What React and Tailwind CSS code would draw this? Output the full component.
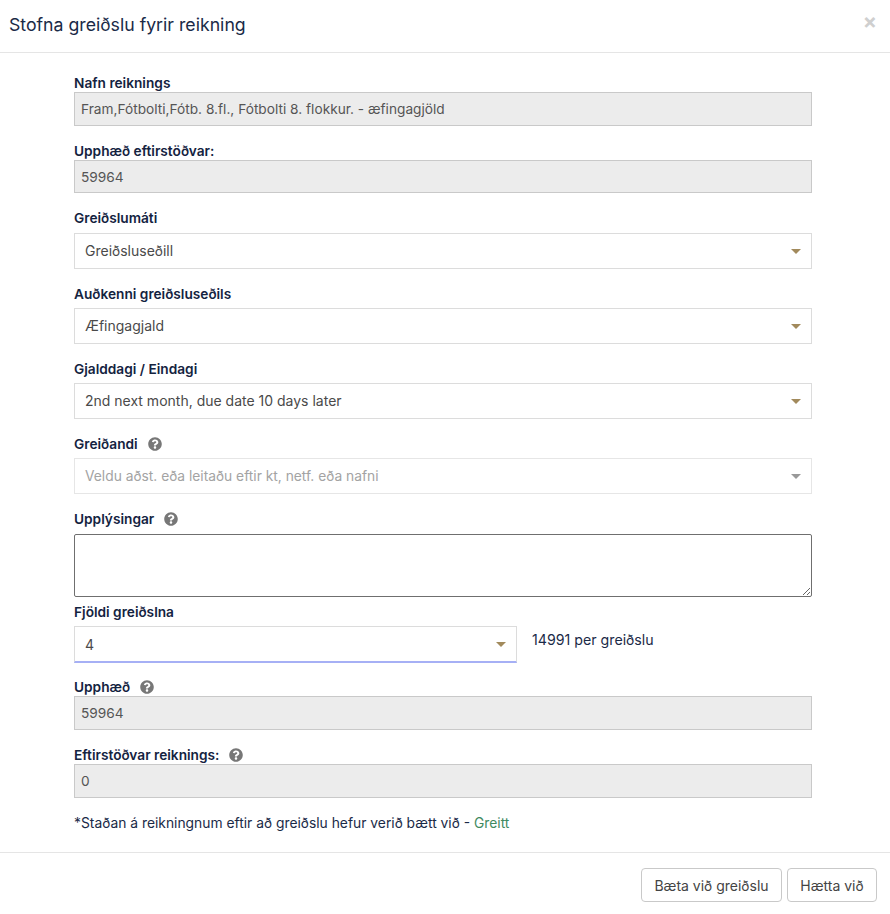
import React from "react";
import { FaQuestionCircle } from "react-icons/fa";

const font = "font-['Inter','Noto_Sans',sans-serif]";

function Help() {
  return <FaQuestionCircle className="ml-[10px] -mt-[2px] inline-block w-[14px] h-[14px] text-[#777777]" />;
}

function Label({ children, help, className = "" }) {
  return (
    <div className={`flex items-center h-[19px] pt-[2px] text-[13.7px] font-semibold leading-[17px] text-[#14233f] ${className}`}>
      <span>{children}</span>
      {help && <Help />}
    </div>
  );
}

function ReadOnly({ value, h = "h-[34px]", className = "" }) {
  return (
    <input
      readOnly
      value={value}
      className={`block w-full ${h} px-[6px] bg-[#ececec] border-[1.5px] border-[#c9c9c9] text-[13.7px] text-[#555555] outline-none ${font} ${className}`}
    />
  );
}

function Select({ value, placeholder, focus, className = "" }) {
  return (
    <div
      className={`flex items-center justify-between h-[36px] pl-[10px] pr-[10px] bg-white border border-[#dcdcdc] ${
        placeholder ? "text-[13.8px] text-[#a3a3a3] border-[#e6e6e6]" : "text-[14px] text-[#4a4a4a]"
      } ${focus ? "h-[37px] border-b-2 border-b-[#a6b0f5]" : ""} ${className}`}
    >
      <span className={placeholder || focus ? "" : "-mt-[2px]"}>{value}</span>
      <span className={`w-0 h-0 border-x-[5px] border-x-transparent border-t-[5px] ${placeholder ? "border-t-[#999999]" : "border-t-[#a28a5c]"}`} />
    </div>
  );
}

export default function App() {
  return (
    <div className={`w-[890px] h-[914px] flex flex-col bg-white ${font} text-[#14233f]`}>
      <header className="relative h-[53px] shrink-0 border-b border-[#e5e5e5] pl-[9px] flex items-center pb-[1px]">
        <h1 className="text-[17.7px] font-normal text-[#1a2a47]">Stofna greiðslu fyrir reikning</h1>
        <span className="absolute right-[13px] top-[10px] text-[21px] leading-[24px] font-bold text-[#cfcfcf]">×</span>
      </header>

      <main className="flex-1 pl-[74px] pr-[78px] pt-[20px]">
        <Label>Nafn reiknings</Label>
        <ReadOnly value="Fram,Fótbolti,Fótb. 8.fl., Fótbolti 8. flokkur. - æfingagjöld" />

        <Label className="mt-[15px]">Upphæð eftirstöðvar:</Label>
        <ReadOnly value="59964" h="h-[33px]" />

        <Label className="mt-[15px] mb-[6px]">Greiðslumáti</Label>
        <Select value="Greiðsluseðill" />

        <Label className="mt-[15px] mb-[5px]">Auðkenni greiðsluseðils</Label>
        <Select value="Æfingagjald" />

        <Label className="mt-[15px] mb-[5px]">Gjalddagi / Eindagi</Label>
        <Select value="2nd next month, due date 10 days later" />

        <Label className="mt-[15px] mb-[5px]" help>Greiðandi</Label>
        <Select value="Veldu aðst. eða leitaðu eftir kt, netf. eða nafni" placeholder />

        <Label className="mt-[15px] mb-[6px]" help>Upplýsingar</Label>
        <textarea className="block w-full h-[63px] border border-[#6f6f6f] rounded-[2px] bg-white outline-none" />

        <Label className="mt-[5px] mb-[5px]">Fjöldi greiðslna</Label>
        <div className="flex items-start">
          <Select value="4" focus className="w-[443px]" />
          <span className="ml-[15px] mt-[4px] text-[14.2px] leading-[20px] text-[#1a2a47]">14991 per greiðslu</span>
        </div>

        <Label className="mt-[14px]" help>Upphæð</Label>
        <ReadOnly value="59964" />

        <Label className="mt-[15px]" help>Eftirstöðvar reiknings:</Label>
        <ReadOnly value="0" />

        <p className="mt-[15px] text-[13.85px] leading-[20px] text-[#1a2a47]">
          *Staðan á reikningnum eftir að greiðslu hefur verið bætt við - <span className="text-[#3f8a5f]">Greitt</span>
        </p>
      </main>

      <footer className="h-[62px] shrink-0 border-t border-[#e5e5e5] flex justify-end gap-[5px] pt-[15px] pr-[13px]">
        <button className="w-[141px] h-[34px] border border-[#c9c9c9] rounded-[4px] bg-white text-[14px] text-[#444444]">Bæta við greiðslu</button>
        <button className="w-[90px] h-[34px] border border-[#c9c9c9] rounded-[4px] bg-white text-[14px] text-[#444444]">Hætta við</button>
      </footer>
    </div>
  );
}
